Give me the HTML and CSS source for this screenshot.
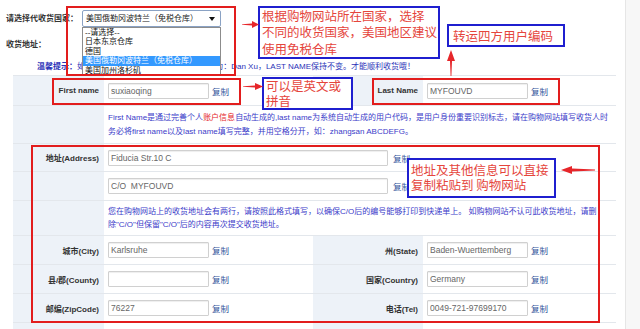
FILE: index.html
```html
<!DOCTYPE html>
<html lang="zh-CN">
<head>
<meta charset="utf-8">
<title>收货地址</title>
<link rel="stylesheet" href="styles.css">
</head>
<body>
<div class="page">
  <div class="main">
    <div class="country-row">
      <span class="strong-label">请选择代收货国家：</span>
      <div class="select">美国俄勒冈波特兰（免税仓库）<span class="caret"></span>
        <ul class="options">
          <li>--请选择--</li>
          <li>日本东京仓库</li>
          <li>德国</li>
          <li class="active">美国俄勒冈波特兰（免税仓库）</li>
          <li>美国加州洛杉矶</li>
        </ul>
      </div>
    </div>
    <div class="addr-title">收货地址：</div>
    <div class="tip"><b>温馨提示：</b>如果您需要修改收货人的姓名,请将其改为：Dan Xu，LAST NAME保持不变。才能顺利收货哦！</div>

    <table class="form">
      <colgroup><col class="c1"><col class="c2"><col class="c3"><col class="c4"></colgroup>
      <tr class="h30">
        <th>First name</th>
        <td><input class="inp" type="text" value="suxiaoqing" readonly><span class="copy">复制</span></td>
        <th>Last Name</th>
        <td><input class="inp" type="text" value="MYFOUVD" readonly><span class="copy">复制</span></td>
      </tr>
      <tr class="h38">
        <th></th>
        <td colspan="3" class="note">First Name是通过完善个人<span class="red">账户信息</span>自动生成的,last name为系统自动生成的用户代码，是用户身份重要识别标志，请在购物网站填写收货人时<br>务必将first name以及last name填写完整，并用空格分开，如：zhangsan ABCDEFG。</td>
      </tr>
      <tr class="h28">
        <th>地址(Address)</th>
        <td colspan="3"><input class="inp wide" type="text" value="Fiducia Str.10 C" readonly><span class="copy wide-copy">复制</span></td>
      </tr>
      <tr class="h29">
        <th></th>
        <td colspan="3"><input class="inp wide" type="text" value="C/O  MYFOUVD" readonly><span class="copy wide-copy">复制</span></td>
      </tr>
      <tr class="h35">
        <th></th>
        <td colspan="3" class="note note2">您在购物网站上的收货地址会有两行，请按照此格式填写，以确保C/O后的编号能够打印到快递单上。 如购物网站不认可此收货地址，请删<br>除"C/O"但保留"C/O"后的内容再次提交收货地址。</td>
      </tr>
      <tr class="h29">
        <th>城市(City)</th>
        <td><input class="inp" type="text" value="Karlsruhe" readonly><span class="copy">复制</span></td>
        <th>州(State)</th>
        <td><input class="inp" type="text" value="Baden-Wuerttemberg" readonly><span class="copy">复制</span></td>
      </tr>
      <tr class="h29">
        <th>县/郡(County)</th>
        <td><input class="inp" type="text" value="" readonly><span class="copy">复制</span></td>
        <th>国家(Country)</th>
        <td><input class="inp" type="text" value="Germany" readonly><span class="copy">复制</span></td>
      </tr>
      <tr class="h29">
        <th>邮编(ZipCode)</th>
        <td><input class="inp" type="text" value="76227" readonly><span class="copy">复制</span></td>
        <th>电话(Tel)</th>
        <td><input class="inp" type="text" value="0049-721-97699170" readonly><span class="copy">复制</span></td>
      </tr>
      <tr class="h29">
        <th></th><td></td><th></th><td></td>
      </tr>
    </table>
  </div>
  <div class="side"></div>

  <!-- annotations -->
  <div class="ann redbox rb-select"></div>
  <div class="ann redbox rb-first"></div>
  <div class="ann redbox rb-last"></div>
  <div class="ann redbox rb-addr"></div>

  <div class="ann bluebox bb-country">根据购物网站所在国家，选择<br>不同的收货国家，美国地区建议<br>使用免税仓库</div>
  <div class="ann bluebox bb-code">转运四方用户编码</div>
  <div class="ann bluebox bb-name">可以是英文或<br>拼音</div>
  <div class="ann bluebox bb-addr">地址及其他信息可以直接<br>复制粘贴到 购物网站</div>

  <svg class="ann arrow ar-1" viewBox="0 0 17 7"><polygon points="0,3.2 10,2.6 10,0 17,3.5 10,7 10,4.4 0,3.8"/></svg>
  <svg class="ann arrow ar-3" viewBox="0 0 20 7"><polygon points="0,3.2 12,2.6 12,0 20,3.5 12,7 12,4.4 0,3.8"/></svg>
  <svg class="ann arrow ar-4" viewBox="0 0 34 8"><polygon points="34,3.6 11,2.6 11,0 0,4 11,8 11,5.4 34,4.4"/></svg>
  <svg class="ann arrow ar-2" viewBox="0 0 8 26"><polygon points="4,0 8,11 5,11 4.4,26 3.6,26 3,11 0,11"/></svg>
</div>
</body>
</html>
```

FILE: styles.css
```css
html, body {
  margin: 0;
  padding: 0;
  background: #fff;
}

body {
  width: 640px;
  height: 329px;
  overflow: hidden;
  font-family: "Liberation Sans", "Noto Sans CJK SC", sans-serif;
  color: #333;
}

.page {
  position: relative;
  display: flex;
  width: 640px;
  height: 329px;
  overflow: hidden;
}

.main {
  width: 625px;
  border-right: 1px solid #e6e6e6;
}

.side {
  flex: 1;
  background: #f7f7f7;
}

/* country selector */
.country-row {
  display: flex;
  align-items: center;
  padding: 10px 0 0 6px;
  height: 17px;
}

.strong-label {
  width: 76px;
  font-size: 8px;
  font-weight: bold;
  line-height: 17px;
  color: #333;
}

.select {
  position: relative;
  box-sizing: border-box;
  width: 139px;
  height: 17px;
  border: 1px solid #8aa2c4;
  border-radius: 2px;
  background: #fff;
  font-size: 8px;
  line-height: 15px;
  padding-left: 3px;
  color: #222;
}

.caret {
  position: absolute;
  right: 5px;
  top: 6px;
  width: 0;
  height: 0;
  border-left: 3px solid transparent;
  border-right: 3px solid transparent;
  border-top: 4px solid #111;
}

.options {
  position: absolute;
  left: -1px;
  top: 16px;
  box-sizing: border-box;
  width: 139px;
  margin: 0;
  padding: 0;
  list-style: none;
  background: #fff;
  border: 1px solid #8c8c8c;
  z-index: 2;
}

.options li {
  height: 9.4px;
  line-height: 9.4px;
  font-size: 8px;
  padding-left: 2px;
  color: #111;
  white-space: nowrap;
}

.options li.active {
  background: #3399ff;
  color: #fff;
}

.addr-title {
  margin-top: 11px;
  padding-left: 6px;
  line-height: 14px;
  font-size: 8px;
  font-weight: bold;
  color: #333;
}

.tip {
  margin-top: 8px;
  padding-left: 37px;
  line-height: 14px;
  font-size: 8px;
  color: #2c33b8;
  white-space: nowrap;
}

.tip b {
  color: #2c33b8;
}

/* form table */
.form {
  margin: 1px 0 0 13px;
  width: 603px;
  border-collapse: collapse;
  table-layout: fixed;
}

.form col.c1 { width: 91px; }
.form col.c2 { width: 209px; }
.form col.c3 { width: 110px; }
.form col.c4 { width: 193px; }

.form th,
.form td {
  padding: 0;
  border-top: 1px solid #e3e7ec;
  border-bottom: 1px solid #e3e7ec;
  font-size: 8px;
  vertical-align: middle;
}

.form th {
  background: #edf2f8;
  text-align: right;
  padding-right: 5px;
  font-weight: bold;
  color: #333;
  white-space: nowrap;
}

.form td {
  padding-left: 4px;
  background: #fff;
  white-space: nowrap;
}

.h28 { height: 28px; }
.h29 { height: 29px; }
.h30 { height: 30px; }
.h35 { height: 35px; }
.h38 { height: 38px; }

.inp {
  box-sizing: border-box;
  width: 101px;
  height: 16px;
  margin: 0;
  padding: 0 2px;
  border: 1px solid #d0d0d0;
  border-radius: 1px;
  box-shadow: inset 0 1px 1px rgba(0, 0, 0, 0.07);
  font-family: "Liberation Sans", sans-serif;
  font-size: 8.5px;
  color: #666;
  background: #fff;
  vertical-align: middle;
  outline: none;
}

.inp.wide {
  width: 280px;
}

.copy {
  margin-left: 3px;
  font-size: 8.5px;
  color: #34559b;
  vertical-align: middle;
}

.copy.wide-copy {
  margin-left: 5px;
}

.form td.note {
  font-size: 8px;
  line-height: 14px;
  color: #3b3bc9;
}

.form td.note2 {
  line-height: 13px;
}

.red {
  color: #e5252a;
}

/* annotations */
.ann {
  position: absolute;
  box-sizing: border-box;
  z-index: 5;
}

.redbox {
  border: 2px solid #e21d1d;
}

.rb-select { left: 66px; top: 6px; width: 170px; height: 70px; }
.rb-first  { left: 52px; top: 78px; width: 189px; height: 27px; }
.rb-last   { left: 372px; top: 78px; width: 188px; height: 27px; }
.rb-addr   { left: 31px; top: 145px; width: 569px; height: 178px; }

.bluebox {
  border: 2px solid #1f1fcf;
  background: #fff;
  color: #e5453c;
  font-family: "Noto Sans CJK SC", sans-serif;
  font-size: 12.5px;
  white-space: nowrap;
}

.bb-country {
  left: 258px;
  top: 6px;
  width: 182px;
  height: 53px;
  padding-left: 2px;
  line-height: 16.4px;
}

.bb-code {
  left: 447px;
  top: 24px;
  width: 118px;
  height: 23px;
  padding-left: 4px;
  line-height: 19px;
}

.bb-name {
  left: 262px;
  top: 77px;
  width: 91px;
  height: 33px;
  padding-left: 2px;
  line-height: 14.5px;
}

.bb-addr {
  left: 407px;
  top: 158px;
  width: 149px;
  height: 40px;
  padding: 2px 0 0 2px;
  line-height: 15px;
}

.arrow {
  fill: #e6262a;
}

.ar-1 { left: 242px; top: 21px; width: 17px; height: 7px; }
.ar-3 { left: 243px; top: 83px; width: 20px; height: 7px; }
.ar-4 { left: 561px; top: 166px; width: 34px; height: 8px; }
.ar-2 { left: 447px; top: 50px; width: 8px; height: 26px; }
```
